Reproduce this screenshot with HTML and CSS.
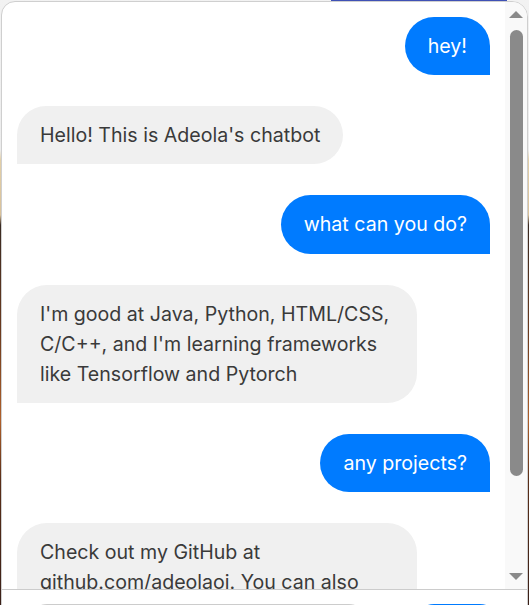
FILE: index.html
```html
<!DOCTYPE html>
<html lang="en">
<head>
<meta charset="utf-8">
<title>Adeola's chatbot</title>
<link rel="stylesheet" href="styles.css">
</head>
<body>
<div class="backdrop-top"><span class="backdrop-bar"></span></div>
<div class="window">
  <div class="chat">
    <div class="messages">
      <div class="msg user">hey!</div>
      <div class="msg bot">Hello! This is Adeola's chatbot</div>
      <div class="msg user">what can you do?</div>
      <div class="msg bot">I'm good at Java, Python, HTML/CSS, C/C++, and I'm learning frameworks like Tensorflow and Pytorch</div>
      <div class="msg user">any projects?</div>
      <div class="msg bot">Check out my GitHub at github.com/adeolaoj. You can also find my projects on my portfolio site</div>
    </div>
    <div class="scrollbar">
      <span class="arrow up"></span>
      <span class="thumb"></span>
      <span class="arrow down"></span>
    </div>
  </div>
  <div class="composer">
    <input class="field" type="text" placeholder="Type a message...">
    <button class="send">Send</button>
  </div>
</div>
</body>
</html>
```

FILE: styles.css
```css
html, body {
  margin: 0;
  padding: 0;
  height: 605px;
  overflow: hidden;
}
body {
  background: linear-gradient(to bottom, #f2f2f2 0px, #ececec 150px, #e2cfa8 160px, #d9c19a 215px, #3a2a22 225px, #6b3a1e 330px, #b0602a 420px, #5a2e18 480px, #3a2018 605px);
  font-family: "Inter", "Liberation Sans", sans-serif;
}
.backdrop-top {
  height: 1px;
  display: flex;
}
.backdrop-bar {
  margin-left: 331px;
  width: 176px;
  height: 1px;
  background: #3f51b5;
}
.window {
  margin-left: 1px;
  width: 525px;
  height: 680px;
  background: #fff;
  border: 1px solid #cfcfcf;
  border-radius: 14px 16px 0 0;
  display: flex;
  flex-direction: column;
  overflow: hidden;
}
.chat {
  height: 587px;
  display: flex;
  flex-shrink: 0;
  border-bottom: 1px solid #cccccc;
  overflow: hidden;
}
.messages {
  flex: 1;
  padding: 15px 15px 0 15px;
  display: flex;
  flex-direction: column;
  gap: 31px;
  overflow: hidden;
}
.msg {
  font-size: 19.6px;
  line-height: 30px;
  padding: 14.1px 23px;
  max-width: 354px;
  border-radius: 30px;
  flex-shrink: 0;
}
.user {
  align-self: flex-end;
  background: #007bff;
  color: #fff;
  border-bottom-right-radius: 0;
}
.bot {
  align-self: flex-start;
  background: #f0f0f0;
  color: #3a3a3a;
  border-bottom-left-radius: 0;
}
.scrollbar {
  width: 22px;
  background: #f9f9f9;
  display: flex;
  flex-direction: column;
  align-items: center;
  padding-top: 9px;
  box-sizing: border-box;
}
.arrow {
  width: 0;
  height: 0;
  border-left: 7px solid transparent;
  border-right: 7px solid transparent;
}
.arrow.up {
  border-bottom: 7px solid #8a8a8a;
}
.arrow.down {
  margin-top: auto;
  margin-bottom: 9px;
  border-top: 7px solid #8a8a8a;
}
.thumb {
  margin-top: 12px;
  width: 13px;
  height: 446px;
  border-radius: 7px;
  background: #8a8a8a;
}
.composer {
  display: flex;
  align-items: flex-start;
  padding: 14px 0 0 25px;
  gap: 45px;
}
.field {
  width: 342px;
  height: 40px;
  box-sizing: border-box;
  border: 1px solid #cccccc;
  border-radius: 20px;
  padding: 0 16px;
  font: 16px "Inter", sans-serif;
  outline: none;
}
.send {
  width: 86px;
  height: 40px;
  border: none;
  border-radius: 20px;
  background: #007bff;
  color: #fff;
  font: 16px "Inter", sans-serif;
}
```
